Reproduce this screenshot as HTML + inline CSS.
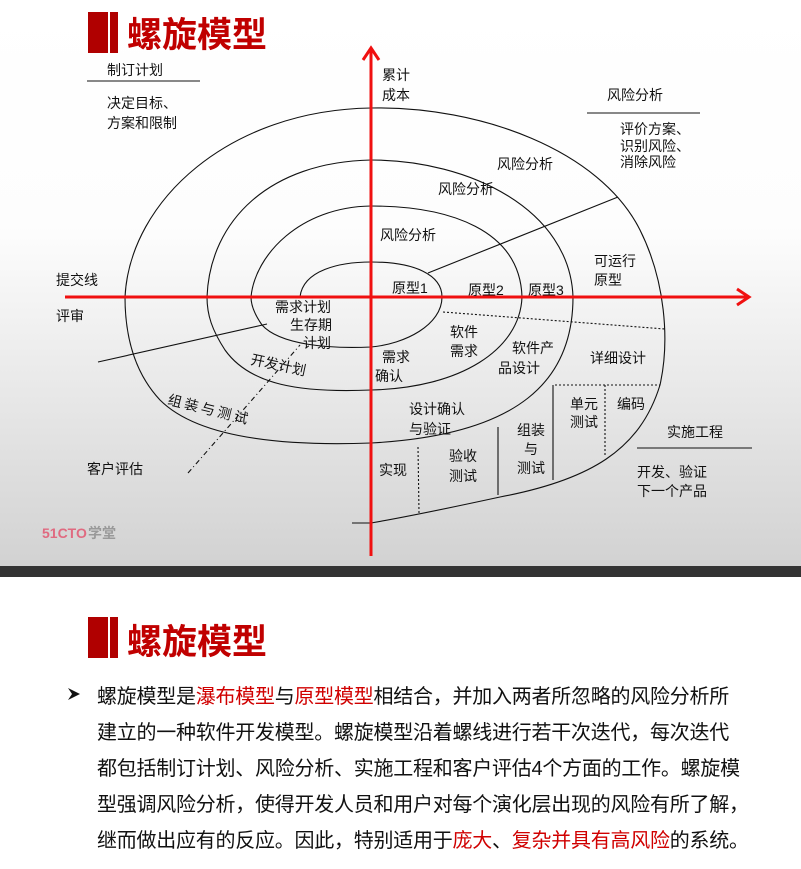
<!DOCTYPE html>
<html><head><meta charset="utf-8"><style>
html,body{margin:0;padding:0;width:801px;height:869px;overflow:hidden;background:#fff;font-family:"Liberation Sans","Noto Sans CJK SC",sans-serif}
#top{position:absolute;left:0;top:0;width:801px;height:566px;background:linear-gradient(#fff 0%,#fdfdfd 40%,#d2d2d2 100%)}
#band{position:absolute;left:0;top:566px;width:801px;height:11px;background:#333}
svg text{font-family:"Liberation Sans","Noto Sans CJK SC",sans-serif;font-size:14px;fill:#111}
.t{position:absolute;font-family:"Liberation Sans","Noto Sans CJK SC",sans-serif;font-size:20px;color:#111;white-space:nowrap;letter-spacing:-0.25px}
.r{color:#d00000}
</style></head><body>
<div id="top"></div>
<div id="band"></div>
<svg width="801" height="566" style="position:absolute;left:0;top:0">
<rect x="88" y="12" width="20" height="41" fill="#b00000"/><rect x="110" y="12" width="8" height="41" fill="#b00000"/>
<text x="127" y="47" style="font-size:35px;font-weight:bold;fill:#c00000">螺旋模型</text>
<g fill="none" stroke="#111" stroke-width="1.1">
<path d="M300,297 C303,270 340,262 371,262 C415,262 442,275 442,297 C442,325 405,344 371,347 C330,349 280,345 262,325 C255,315 251,305 251,297 C255,255 300,207 371,206 C450,206 520,230 522,297 C520,350 460,388 371,390 C300,393 250,385 225,350 C212,330 207,315 207,297 C210,220 270,162 371,160 C470,160 570,210 573,297 C573,380 520,435 371,443 C290,446 200,440 160,400 C132,370 125,330 125,297 C130,200 230,110 371,108 C480,106 600,150 640,230 C665,280 670,340 660,385 C640,450 590,480 500,497 C440,510 400,518 371,523 L352,523"/>
<path d="M428,273 L618,197"/>
<path d="M98,362 L267,324"/>
<path d="M443,312 L665,329" stroke-dasharray="2,2"/>
<path d="M188,473 L300,345" stroke-dasharray="5,3,1,3"/>
<path d="M555,385 L660,385" stroke-dasharray="2,2"/>
<path d="M553,385 L553,480"/>
<path d="M605,385 L605,455" stroke-dasharray="2,2"/>
<path d="M498,427 L498,495"/>
<path d="M418,447 L419,513" stroke-dasharray="2,2"/>
<path d="M87,81 L200,81"/><path d="M587,113 L700,113"/><path d="M637,448 L752,448"/>
</g>
<g stroke="#f01010" stroke-width="3" fill="none">
<path d="M371,556 L371,50"/><path d="M363,60 L371,48 L379,60"/>
<path d="M65,297 L748,297"/><path d="M737,289 L749,297 L737,305"/>
</g>
<text x="107" y="75">制订计划</text>
<text x="107" y="108">决定目标、</text><text x="107" y="128">方案和限制</text>
<text x="382" y="80">累计</text><text x="382" y="100">成本</text>
<text x="607" y="100">风险分析</text>
<text x="620" y="134">评价方案、</text><text x="620" y="151">识别风险、</text><text x="620" y="167">消除风险</text>
<text x="497" y="169">风险分析</text><text x="438" y="194">风险分析</text><text x="380" y="240">风险分析</text>
<text x="56" y="285">提交线</text><text x="56" y="321">评审</text>
<text x="392" y="293">原型1</text><text x="468" y="295">原型2</text><text x="528" y="295">原型3</text>
<text x="594" y="266">可运行</text><text x="594" y="285">原型</text>
<text x="275" y="312">需求计划</text><text x="290" y="330">生存期</text><text x="303" y="348">计划</text>
<text x="382" y="362">需求</text><text x="375" y="381">确认</text>
<text x="450" y="337">软件</text><text x="450" y="356">需求</text>
<text x="512" y="353">软件产</text><text x="498" y="373">品设计</text>
<text x="590" y="363">详细设计</text>
<text x="250" y="364" transform="rotate(12 250 364)">开发计划</text>
<text x="167" y="404" transform="rotate(14 167 404)" style="letter-spacing:3px">组装与测试</text>
<text x="409" y="414">设计确认</text><text x="409" y="434">与验证</text>
<text x="570" y="409">单元</text><text x="570" y="427">测试</text><text x="617" y="409">编码</text>
<text x="667" y="437">实施工程</text>
<text x="637" y="477">开发、验证</text><text x="637" y="496">下一个产品</text>
<text x="517" y="435">组装</text><text x="524" y="454">与</text><text x="517" y="473">测试</text>
<text x="449" y="461">验收</text><text x="449" y="481">测试</text>
<text x="379" y="475">实现</text>
<text x="87" y="474">客户评估</text>
<text x="42" y="538" style="font-size:14px;font-weight:bold;fill:#e06a80">51CTO</text><text x="88" y="538" style="font-size:14px;font-weight:bold;fill:#999">学堂</text>
</svg>
<div style="position:absolute;left:88px;top:617px;width:20px;height:41px;background:#b00000"></div>
<div style="position:absolute;left:110px;top:617px;width:8px;height:41px;background:#b00000"></div>
<div style="position:absolute;left:127px;top:614px;font-size:35px;font-weight:bold;color:#c00000;font-family:'Liberation Sans','Noto Sans CJK SC',sans-serif">螺旋模型</div>
<svg width="16" height="16" style="position:absolute;left:66px;top:686px"><path d="M2,2 L14,8 L2,14 L6,8 Z" fill="#111"/></svg>
<div class="t" style="left:97px;top:680px">螺旋模型是<span class="r">瀑布模型</span>与<span class="r">原型模型</span>相结合，并加入两者所忽略的风险分析所</div>
<div class="t" style="left:97px;top:716px">建立的一种软件开发模型。螺旋模型沿着螺线进行若干次迭代，每次迭代</div>
<div class="t" style="left:97px;top:752px">都包括制订计划、风险分析、实施工程和客户评估4个方面的工作。螺旋模</div>
<div class="t" style="left:97px;top:788px">型强调风险分析，使得开发人员和用户对每个演化层出现的风险有所了解，</div>
<div class="t" style="left:97px;top:824px">继而做出应有的反应。因此，特别适用于<span class="r">庞大</span>、<span class="r">复杂并具有高风险</span>的系统。</div>
</body></html>
